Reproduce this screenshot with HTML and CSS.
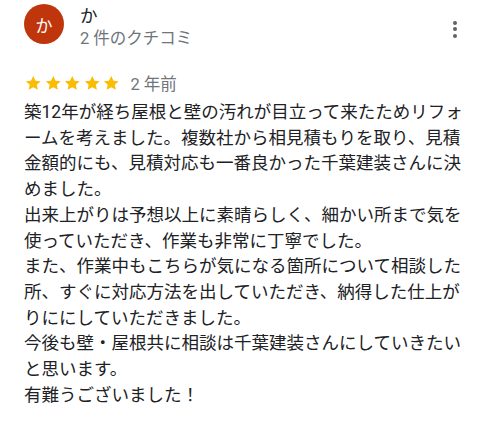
FILE: index.html
```html
<!DOCTYPE html>
<html lang="ja">
<head>
    <meta charset="UTF-8">
    <title>クチコミ</title>
    <link rel="stylesheet" href="styles.css">
</head>
<body>
    <div class="review">
        <div class="review-head">
            <div class="avatar">か</div>
            <div class="author">
                <div class="author-name">か</div>
                <div class="author-meta">2 件のクチコミ</div>
            </div>
            <button class="menu" aria-label="メニュー">
                <span></span><span></span><span></span>
            </button>
        </div>

        <div class="rating">
            <div class="stars">
                <svg viewBox="0 0 24 24"><path d="M12 2.6l2.9 6.1 6.6.7-4.9 4.5 1.4 6.6L12 17.1l-6 3.4 1.4-6.6-4.9-4.5 6.6-.7z"/></svg>
                <svg viewBox="0 0 24 24"><path d="M12 2.6l2.9 6.1 6.6.7-4.9 4.5 1.4 6.6L12 17.1l-6 3.4 1.4-6.6-4.9-4.5 6.6-.7z"/></svg>
                <svg viewBox="0 0 24 24"><path d="M12 2.6l2.9 6.1 6.6.7-4.9 4.5 1.4 6.6L12 17.1l-6 3.4 1.4-6.6-4.9-4.5 6.6-.7z"/></svg>
                <svg viewBox="0 0 24 24"><path d="M12 2.6l2.9 6.1 6.6.7-4.9 4.5 1.4 6.6L12 17.1l-6 3.4 1.4-6.6-4.9-4.5 6.6-.7z"/></svg>
                <svg viewBox="0 0 24 24"><path d="M12 2.6l2.9 6.1 6.6.7-4.9 4.5 1.4 6.6L12 17.1l-6 3.4 1.4-6.6-4.9-4.5 6.6-.7z"/></svg>
            </div>
            <span class="date">2 年前</span>
        </div>

        <p class="review-text">築12年が経ち屋根と壁の汚れが目立って来たためリフォームを考えました。複数社から相見積もりを取り、見積金額的にも、見積対応も一番良かった千葉建装さんに決めました。
出来上がりは予想以上に素晴らしく、細かい所まで気を使っていただき、作業も非常に丁寧でした。
また、作業中もこちらが気になる箇所について相談した所、すぐに対応方法を出していただき、納得した仕上がりににしていただきました。
今後も壁・屋根共に相談は千葉建装さんにしていきたいと思います。
有難うございました！</p>
    </div>
</body>
</html>
```

FILE: styles.css
```css
body {
    margin: 0;
    background: #fff;
    color: #202124;
    font-family: Roboto, "Noto Sans CJK JP", sans-serif;
}

.review {
    padding: 4px 20px 0 24px;
}

.review-head {
    display: flex;
    align-items: flex-start;
}

.avatar {
    width: 40px;
    height: 40px;
    border-radius: 50%;
    background: #bf360c;
    color: #fff;
    font-size: 17px;
    display: flex;
    align-items: center;
    justify-content: center;
    flex-shrink: 0;
}

.author {
    flex: 1;
    margin-left: 16px;
}
.author-name {
    font-size: 17.5px;
    line-height: 24px;
}
.author-meta {
    font-size: 16.5px;
    line-height: 22px;
    color: #70757a;
}

.menu {
    width: 24px;
    height: 30px;
    margin-top: 10px;
    margin-right: -2px;
    padding: 0;
    border: none;
    background: none;
    display: flex;
    flex-direction: column;
    align-items: center;
    justify-content: center;
    gap: 2.5px;
}
.menu span {
    width: 4px;
    height: 4px;
    border-radius: 50%;
    background: #5f6368;
}

.rating {
    display: flex;
    align-items: center;
    margin-top: 20px;
    height: 26px;
}
.stars {
    display: flex;
    gap: 1px;
}
.stars svg {
    width: 18.5px;
    height: 18.5px;
    fill: #fbbc04;
}
.date {
    margin-left: 10px;
    font-size: 16.5px;
    color: #70757a;
}

.review-text {
    margin: 4px 0 0;
    font-size: 17.5px;
    line-height: 25.7px;
    white-space: pre-line;
}
```
